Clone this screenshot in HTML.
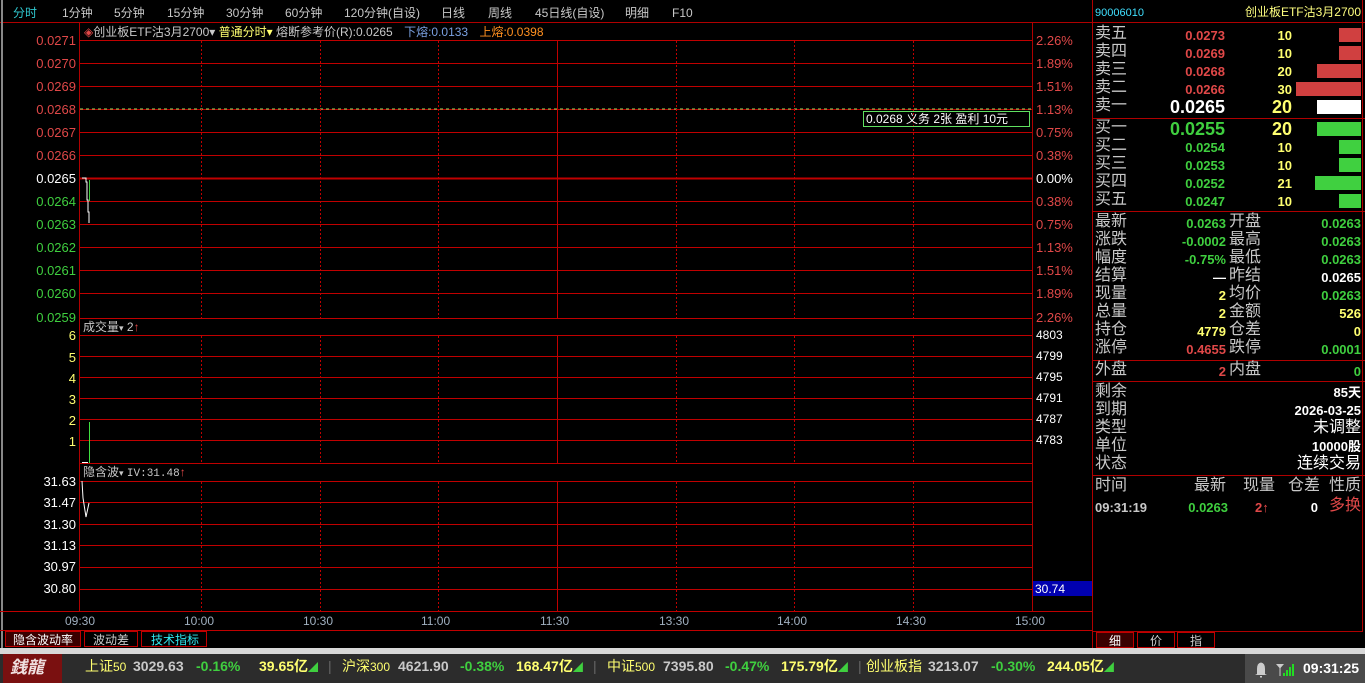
<!DOCTYPE html>
<html><head><meta charset="utf-8">
<style>
*{margin:0;padding:0;box-sizing:border-box}
body{width:1365px;height:683px;background:#000;overflow:hidden;position:relative;font-family:"Liberation Sans","Noto Sans CJK SC",sans-serif;font-size:12px;color:#c0c0c0}
.a{position:absolute;white-space:nowrap;line-height:1}
.r{text-align:right}
.red{color:#e04848}.grn{color:#3fcf3f}.wht{color:#fff}.yel{color:#ffff70}.cy{color:#40e0ff}.gry{color:#c8c8c8}
.mono{font-family:"Liberation Mono","Noto Sans CJK SC",monospace}
.lbl{font-size:16px;color:#c8c8c8}
.num{font-size:13px;font-weight:bold}
.ax{font-size:13px}
</style></head><body>
<div class="a" style="left:0;top:0;width:1092px;height:23px;border-bottom:1px solid #b00000"></div>
<div class="a" style="left:13px;top:7px;font-size:12px;color:#30c8d0">分时</div>
<div class="a gry" style="left:62px;top:7px">1分钟</div>
<div class="a gry" style="left:114px;top:7px">5分钟</div>
<div class="a gry" style="left:167px;top:7px">15分钟</div>
<div class="a gry" style="left:226px;top:7px">30分钟</div>
<div class="a gry" style="left:285px;top:7px">60分钟</div>
<div class="a gry" style="left:344px;top:7px">120分钟(自设)</div>
<div class="a gry" style="left:441px;top:7px">日线</div>
<div class="a gry" style="left:488px;top:7px">周线</div>
<div class="a gry" style="left:535px;top:7px">45日线(自设)</div>
<div class="a gry" style="left:625px;top:7px">明细</div>
<div class="a gry" style="left:672px;top:7px">F10</div>

<svg class="a" style="left:0;top:0" width="1365" height="683">
<rect x="1" y="0" width="2" height="648" fill="#888"/>
<line x1="1092.5" y1="0" x2="1092.5" y2="648" stroke="#b00000"/>
<line x1="79.5" y1="23" x2="79.5" y2="611" stroke="#b00000"/>
<line x1="1032.5" y1="23" x2="1032.5" y2="611" stroke="#b00000"/>
<line x1="80" y1="40.5" x2="1032" y2="40.5" stroke="#c00000"/>
<g stroke="#c00000">
<line x1="80" y1="63.5" x2="1032" y2="63.5"/><line x1="80" y1="86.5" x2="1032" y2="86.5"/>
<line x1="80" y1="109.5" x2="1032" y2="109.5"/>
<line x1="80" y1="132.5" x2="1032" y2="132.5"/><line x1="80" y1="155.5" x2="1032" y2="155.5"/>
<line x1="80" y1="178.5" x2="1032" y2="178.5" stroke-width="2"/>
<line x1="80" y1="201.5" x2="1032" y2="201.5"/><line x1="80" y1="224.5" x2="1032" y2="224.5"/>
<line x1="80" y1="247.5" x2="1032" y2="247.5"/><line x1="80" y1="270.5" x2="1032" y2="270.5"/>
<line x1="80" y1="293.5" x2="1032" y2="293.5"/><line x1="80" y1="318.5" x2="1032" y2="318.5"/>
<line x1="80" y1="335.5" x2="1032" y2="335.5"/><line x1="80" y1="356.5" x2="1032" y2="356.5"/>
<line x1="80" y1="377.5" x2="1032" y2="377.5"/><line x1="80" y1="398.5" x2="1032" y2="398.5"/>
<line x1="80" y1="419.5" x2="1032" y2="419.5"/><line x1="80" y1="440.5" x2="1032" y2="440.5"/>
<line x1="80" y1="463.5" x2="1032" y2="463.5"/>
<line x1="80" y1="481.5" x2="1032" y2="481.5"/><line x1="80" y1="502.5" x2="1032" y2="502.5"/>
<line x1="80" y1="524.5" x2="1032" y2="524.5"/><line x1="80" y1="545.5" x2="1032" y2="545.5"/>
<line x1="80" y1="567.5" x2="1032" y2="567.5"/><line x1="80" y1="589.5" x2="1032" y2="589.5"/>
<line x1="0" y1="611.5" x2="1092" y2="611.5"/>
<line x1="0" y1="630.5" x2="1092" y2="630.5"/>
</g>
<line x1="80" y1="109" x2="1032" y2="109" stroke="#a0e060" stroke-dasharray="3,3"/>
<g stroke="#c00000" stroke-dasharray="2,2">
<line x1="201.5" y1="41" x2="201.5" y2="318"/><line x1="320.5" y1="41" x2="320.5" y2="318"/><line x1="438.5" y1="41" x2="438.5" y2="318"/>
<line x1="676.5" y1="41" x2="676.5" y2="318"/><line x1="794.5" y1="41" x2="794.5" y2="318"/><line x1="913.5" y1="41" x2="913.5" y2="318"/>
<line x1="201.5" y1="336" x2="201.5" y2="463"/><line x1="320.5" y1="336" x2="320.5" y2="463"/><line x1="438.5" y1="336" x2="438.5" y2="463"/>
<line x1="676.5" y1="336" x2="676.5" y2="463"/><line x1="794.5" y1="336" x2="794.5" y2="463"/><line x1="913.5" y1="336" x2="913.5" y2="463"/>
<line x1="201.5" y1="482" x2="201.5" y2="611"/><line x1="320.5" y1="482" x2="320.5" y2="611"/><line x1="438.5" y1="482" x2="438.5" y2="611"/>
<line x1="676.5" y1="482" x2="676.5" y2="611"/><line x1="794.5" y1="482" x2="794.5" y2="611"/><line x1="913.5" y1="482" x2="913.5" y2="611"/>
</g>
<g stroke="#c00000">
<line x1="557.5" y1="41" x2="557.5" y2="318"/><line x1="557.5" y1="336" x2="557.5" y2="463"/><line x1="557.5" y1="482" x2="557.5" y2="611"/>
</g>
<polyline points="82,178 86,178 86,182 87,182 87,200 88,200 88,212 89,212 89,223" fill="none" stroke="#fff"/>
<line x1="89.5" y1="180" x2="89.5" y2="201" stroke="#40d040"/>
<line x1="89.5" y1="422" x2="89.5" y2="463" stroke="#40e040"/>
<line x1="82" y1="462.5" x2="88" y2="462.5" stroke="#fff"/>
<polyline points="82,481 83,498 86,517 89,503" fill="none" stroke="#fff"/>
<rect x="1033" y="581" width="59" height="15" fill="#0000b0"/>
<line x1="1093" y1="22.5" x2="1365" y2="22.5" stroke="#b00000"/>
<g stroke="#b00000">
<line x1="1093" y1="118.5" x2="1365" y2="118.5"/><line x1="1093" y1="211.5" x2="1365" y2="211.5"/>
<line x1="1093" y1="360.5" x2="1365" y2="360.5"/><line x1="1093" y1="381.5" x2="1365" y2="381.5"/>
<line x1="1093" y1="475.5" x2="1365" y2="475.5"/><line x1="1093" y1="631.5" x2="1363" y2="631.5"/>
<line x1="1362.5" y1="0" x2="1362.5" y2="632"/>
</g>
<rect x="1339" y="28" width="22" height="14" fill="#d04040"/>
<rect x="1339" y="46" width="22" height="14" fill="#d04040"/>
<rect x="1317" y="64" width="44" height="14" fill="#d04040"/>
<rect x="1296" y="82" width="65" height="14" fill="#d04040"/>
<rect x="1317" y="100" width="44" height="14" fill="#fff"/>
<rect x="1317" y="122" width="44" height="14" fill="#40d040"/>
<rect x="1339" y="140" width="22" height="14" fill="#40d040"/>
<rect x="1339" y="158" width="22" height="14" fill="#40d040"/>
<rect x="1315" y="176" width="46" height="14" fill="#40d040"/>
<rect x="1339" y="194" width="22" height="14" fill="#40d040"/>
</svg>

<div class="a" style="left:84px;top:26px;font-size:12px"><span class="red">◈</span><span class="gry">创业板ETF沽3月2700▾</span> <span class="yel">普通分时▾</span> <span class="gry">熔断参考价(R):0.0265</span> <span style="color:#7aa0e0;margin-left:8px">下熔:0.0133</span> <span style="color:#ff9020;margin-left:8px">上熔:0.0398</span></div>
<div class="a" style="left:863px;top:111px;width:167px;height:16px;border:1px solid #60e060;color:#fff;font-size:12px;padding:1px 2px">0.0268 义务 2张 盈利 10元</div>

<div class="a r red ax" style="left:16px;width:60px;top:34px">0.0271</div>
<div class="a r red ax" style="left:16px;width:60px;top:57px">0.0270</div>
<div class="a r red ax" style="left:16px;width:60px;top:80px">0.0269</div>
<div class="a r red ax" style="left:16px;width:60px;top:103px">0.0268</div>
<div class="a r red ax" style="left:16px;width:60px;top:126px">0.0267</div>
<div class="a r red ax" style="left:16px;width:60px;top:149px">0.0266</div>
<div class="a r wht ax" style="left:16px;width:60px;top:172px">0.0265</div>
<div class="a r grn ax" style="left:16px;width:60px;top:195px">0.0264</div>
<div class="a r grn ax" style="left:16px;width:60px;top:218px">0.0263</div>
<div class="a r grn ax" style="left:16px;width:60px;top:241px">0.0262</div>
<div class="a r grn ax" style="left:16px;width:60px;top:264px">0.0261</div>
<div class="a r grn ax" style="left:16px;width:60px;top:287px">0.0260</div>
<div class="a r grn ax" style="left:16px;width:60px;top:311px">0.0259</div>
<div class="a red ax" style="left:1036px;top:34px">2.26%</div>
<div class="a red ax" style="left:1036px;top:57px">1.89%</div>
<div class="a red ax" style="left:1036px;top:80px">1.51%</div>
<div class="a red ax" style="left:1036px;top:103px">1.13%</div>
<div class="a red ax" style="left:1036px;top:126px">0.75%</div>
<div class="a red ax" style="left:1036px;top:149px">0.38%</div>
<div class="a wht ax" style="left:1036px;top:172px">0.00%</div>
<div class="a red ax" style="left:1036px;top:195px">0.38%</div>
<div class="a red ax" style="left:1036px;top:218px">0.75%</div>
<div class="a red ax" style="left:1036px;top:241px">1.13%</div>
<div class="a red ax" style="left:1036px;top:264px">1.51%</div>
<div class="a red ax" style="left:1036px;top:287px">1.89%</div>
<div class="a red ax" style="left:1036px;top:311px">2.26%</div>

<div class="a gry" style="left:83px;top:321px">成交量<span style="font-size:9px">▾</span> 2<span class="red">↑</span></div>
<div class="a r yel ax" style="left:16px;width:60px;top:329px">6</div>
<div class="a r yel ax" style="left:16px;width:60px;top:351px">5</div>
<div class="a r yel ax" style="left:16px;width:60px;top:372px">4</div>
<div class="a r yel ax" style="left:16px;width:60px;top:393px">3</div>
<div class="a r yel ax" style="left:16px;width:60px;top:414px">2</div>
<div class="a r yel ax" style="left:16px;width:60px;top:435px">1</div>
<div class="a wht" style="left:1036px;top:329px">4803</div>
<div class="a wht" style="left:1036px;top:350px">4799</div>
<div class="a wht" style="left:1036px;top:371px">4795</div>
<div class="a wht" style="left:1036px;top:392px">4791</div>
<div class="a wht" style="left:1036px;top:413px">4787</div>
<div class="a wht" style="left:1036px;top:434px">4783</div>

<div class="a gry" style="left:83px;top:466px">隐含波<span style="font-size:9px">▾</span> <span class="mono" style="font-size:11px">IV:31.48</span><span class="red">↑</span></div>
<div class="a r wht ax" style="left:16px;width:60px;top:475px">31.63</div>
<div class="a r wht ax" style="left:16px;width:60px;top:496px">31.47</div>
<div class="a r wht ax" style="left:16px;width:60px;top:518px">31.30</div>
<div class="a r wht ax" style="left:16px;width:60px;top:539px">31.13</div>
<div class="a r wht ax" style="left:16px;width:60px;top:560px">30.97</div>
<div class="a r wht ax" style="left:16px;width:60px;top:582px">30.80</div>
<div class="a wht" style="left:1035px;top:583px">30.74</div>

<div class="a" style="left:65px;top:615px;color:#a0b0c0">09:30</div>
<div class="a" style="left:184px;top:615px;color:#a0b0c0">10:00</div>
<div class="a" style="left:303px;top:615px;color:#a0b0c0">10:30</div>
<div class="a" style="left:421px;top:615px;color:#a0b0c0">11:00</div>
<div class="a" style="left:540px;top:615px;color:#a0b0c0">11:30</div>
<div class="a" style="left:659px;top:615px;color:#a0b0c0">13:30</div>
<div class="a" style="left:777px;top:615px;color:#a0b0c0">14:00</div>
<div class="a" style="left:896px;top:615px;color:#a0b0c0">14:30</div>
<div class="a" style="left:1015px;top:615px;color:#a0b0c0">15:00</div>

<div class="a" style="left:5px;top:631px;width:76px;height:16px;border:1px solid #c00000;background:#3a0000;color:#fff;font-size:12px;padding:2px 0 0 7px">隐含波动率</div>
<div class="a" style="left:84px;top:631px;width:54px;height:16px;border:1px solid #c00000;color:#ccc;font-size:12px;padding:2px 0 0 8px">波动差</div>
<div class="a" style="left:141px;top:631px;width:66px;height:16px;border:1px solid #c00000;color:#30e8f0;font-size:12px;padding:2px 0 0 9px">技术指标</div>
<div class="a" style="left:1096px;top:632px;width:38px;height:16px;border:1px solid #c00000;background:#3a0000;color:#fff;padding:2px 0 0 12px">细</div>
<div class="a" style="left:1137px;top:632px;width:38px;height:16px;border:1px solid #c00000;color:#ccc;padding:2px 0 0 12px">价</div>
<div class="a" style="left:1177px;top:632px;width:38px;height:16px;border:1px solid #c00000;color:#ccc;padding:2px 0 0 12px">指</div>
<div class="a" style="left:0;top:648px;width:1365px;height:6px;background:#d8d8d8"></div>

<div class="a cy" style="left:1095px;top:8px;font-size:11px">90006010</div>
<div class="a r" style="left:1200px;width:161px;top:6px;color:#ffff80;font-size:12px">创业板ETF沽3月2700</div>

<div class="a lbl" style="left:1095px;top:26px">卖五</div><div class="a r red num" style="left:1150px;width:75px;top:29px">0.0273</div><div class="a r yel num" style="left:1240px;width:52px;top:29px">10</div>
<div class="a lbl" style="left:1095px;top:44px">卖四</div><div class="a r red num" style="left:1150px;width:75px;top:47px">0.0269</div><div class="a r yel num" style="left:1240px;width:52px;top:47px">10</div>
<div class="a lbl" style="left:1095px;top:62px">卖三</div><div class="a r red num" style="left:1150px;width:75px;top:65px">0.0268</div><div class="a r yel num" style="left:1240px;width:52px;top:65px">20</div>
<div class="a lbl" style="left:1095px;top:80px">卖二</div><div class="a r red num" style="left:1150px;width:75px;top:83px">0.0266</div><div class="a r yel num" style="left:1240px;width:52px;top:83px">30</div>
<div class="a lbl" style="left:1095px;top:98px">卖一</div><div class="a r wht" style="left:1130px;width:95px;top:98px;font-size:18px;font-weight:bold">0.0265</div><div class="a r yel" style="left:1240px;width:52px;top:98px;font-size:18px;font-weight:bold">20</div>
<div class="a lbl" style="left:1095px;top:120px">买一</div><div class="a r grn" style="left:1130px;width:95px;top:120px;font-size:18px;font-weight:bold">0.0255</div><div class="a r yel" style="left:1240px;width:52px;top:120px;font-size:18px;font-weight:bold">20</div>
<div class="a lbl" style="left:1095px;top:138px">买二</div><div class="a r grn num" style="left:1150px;width:75px;top:141px">0.0254</div><div class="a r yel num" style="left:1240px;width:52px;top:141px">10</div>
<div class="a lbl" style="left:1095px;top:156px">买三</div><div class="a r grn num" style="left:1150px;width:75px;top:159px">0.0253</div><div class="a r yel num" style="left:1240px;width:52px;top:159px">10</div>
<div class="a lbl" style="left:1095px;top:174px">买四</div><div class="a r grn num" style="left:1150px;width:75px;top:177px">0.0252</div><div class="a r yel num" style="left:1240px;width:52px;top:177px">21</div>
<div class="a lbl" style="left:1095px;top:192px">买五</div><div class="a r grn num" style="left:1150px;width:75px;top:195px">0.0247</div><div class="a r yel num" style="left:1240px;width:52px;top:195px">10</div>

<div class="a lbl" style="left:1095px;top:214px">最新</div><div class="a r grn num" style="left:1140px;width:86px;top:217px">0.0263</div><div class="a lbl" style="left:1229px;top:214px">开盘</div><div class="a r grn num" style="left:1280px;width:81px;top:217px">0.0263</div>
<div class="a lbl" style="left:1095px;top:232px">涨跌</div><div class="a r grn num" style="left:1140px;width:86px;top:235px">-0.0002</div><div class="a lbl" style="left:1229px;top:232px">最高</div><div class="a r grn num" style="left:1280px;width:81px;top:235px">0.0263</div>
<div class="a lbl" style="left:1095px;top:250px">幅度</div><div class="a r grn num" style="left:1140px;width:86px;top:253px">-0.75%</div><div class="a lbl" style="left:1229px;top:250px">最低</div><div class="a r grn num" style="left:1280px;width:81px;top:253px">0.0263</div>
<div class="a lbl" style="left:1095px;top:268px">结算</div><div class="a r wht num" style="left:1140px;width:86px;top:271px">—</div><div class="a lbl" style="left:1229px;top:268px">昨结</div><div class="a r wht num" style="left:1280px;width:81px;top:271px">0.0265</div>
<div class="a lbl" style="left:1095px;top:286px">现量</div><div class="a r yel num" style="left:1140px;width:86px;top:289px">2</div><div class="a lbl" style="left:1229px;top:286px">均价</div><div class="a r grn num" style="left:1280px;width:81px;top:289px">0.0263</div>
<div class="a lbl" style="left:1095px;top:304px">总量</div><div class="a r yel num" style="left:1140px;width:86px;top:307px">2</div><div class="a lbl" style="left:1229px;top:304px">金额</div><div class="a r yel num" style="left:1280px;width:81px;top:307px">526</div>
<div class="a lbl" style="left:1095px;top:322px">持仓</div><div class="a r yel num" style="left:1140px;width:86px;top:325px">4779</div><div class="a lbl" style="left:1229px;top:322px">仓差</div><div class="a r yel num" style="left:1280px;width:81px;top:325px">0</div>
<div class="a lbl" style="left:1095px;top:340px">涨停</div><div class="a r red num" style="left:1140px;width:86px;top:343px">0.4655</div><div class="a lbl" style="left:1229px;top:340px">跌停</div><div class="a r grn num" style="left:1280px;width:81px;top:343px">0.0001</div>
<div class="a lbl" style="left:1095px;top:362px">外盘</div><div class="a r red num" style="left:1140px;width:86px;top:365px">2</div><div class="a lbl" style="left:1229px;top:362px">内盘</div><div class="a r grn num" style="left:1280px;width:81px;top:365px">0</div>

<div class="a lbl" style="left:1095px;top:384px">剩余</div><div class="a r wht num" style="left:1200px;width:161px;top:386px">85天</div>
<div class="a lbl" style="left:1095px;top:402px">到期</div><div class="a r wht num" style="left:1200px;width:161px;top:404px">2026-03-25</div>
<div class="a lbl" style="left:1095px;top:420px">类型</div><div class="a r wht" style="left:1200px;width:161px;top:420px;font-size:16px">未调整</div>
<div class="a lbl" style="left:1095px;top:438px">单位</div><div class="a r wht num" style="left:1200px;width:161px;top:440px">10000股</div>
<div class="a lbl" style="left:1095px;top:456px">状态</div><div class="a r wht" style="left:1200px;width:161px;top:456px;font-size:16px">连续交易</div>

<div class="a lbl" style="left:1095px;top:478px">时间</div>
<div class="a lbl r" style="left:1180px;width:46px;top:478px">最新</div>
<div class="a lbl" style="left:1243px;top:478px">现量</div>
<div class="a lbl" style="left:1288px;top:478px">仓差</div>
<div class="a lbl" style="left:1329px;top:478px">性质</div>
<div class="a num gry" style="left:1095px;top:501px">09:31:19</div>
<div class="a r grn num" style="left:1170px;width:58px;top:501px">0.0263</div>
<div class="a red num" style="left:1255px;top:501px">2↑</div>
<div class="a r wht num" style="left:1290px;width:28px;top:501px">0</div>
<div class="a red" style="left:1329px;top:498px;font-size:16px">多换</div>

<div class="a" style="left:0;top:654px;width:1365px;height:29px;background:#2c2c2c"></div>
<div class="a" style="left:3px;top:654px;width:59px;height:29px;background:#7a1010;color:#f0e0e0;font-size:17px;font-weight:bold;font-style:italic;padding:5px 0 0 7px">銭龍</div>
<div class="a" style="left:0;top:659px;font-size:14px;line-height:18px;width:1245px">
<span class="a yel" style="left:85px">上证<span style="font-size:12px">50</span></span><span class="a gry" style="left:133px;font-weight:bold">3029.63</span><span class="a grn" style="left:196px;font-weight:bold">-0.16%</span><span class="a yel" style="left:259px;font-weight:bold">39.65亿<span style="color:#3fcf3f;font-size:10px">◢</span></span>
<span class="a" style="left:328px;color:#666">|</span>
<span class="a yel" style="left:342px">沪深<span style="font-size:12px">300</span></span><span class="a gry" style="left:398px;font-weight:bold">4621.90</span><span class="a grn" style="left:460px;font-weight:bold">-0.38%</span><span class="a yel" style="left:516px;font-weight:bold">168.47亿<span style="color:#3fcf3f;font-size:10px">◢</span></span>
<span class="a" style="left:593px;color:#666">|</span>
<span class="a yel" style="left:607px">中证<span style="font-size:12px">500</span></span><span class="a gry" style="left:663px;font-weight:bold">7395.80</span><span class="a grn" style="left:725px;font-weight:bold">-0.47%</span><span class="a yel" style="left:781px;font-weight:bold">175.79亿<span style="color:#3fcf3f;font-size:10px">◢</span></span>
<span class="a" style="left:858px;color:#666">|</span>
<span class="a yel" style="left:866px">创业板指</span><span class="a gry" style="left:928px;font-weight:bold">3213.07</span><span class="a grn" style="left:991px;font-weight:bold">-0.30%</span><span class="a yel" style="left:1047px;font-weight:bold">244.05亿<span style="color:#3fcf3f;font-size:10px">◢</span></span>
</div>
<div class="a" style="left:1245px;top:654px;width:120px;height:29px;background:#4a4a4a"></div>
<svg class="a" style="left:1252px;top:659px" width="45" height="20">
<path d="M5 15 L5 10 Q5 4 9 3.5 Q13 4 13 10 L13 15 L15 16 L3 16 Z M8 17 h2 v1.5 h-2z" fill="#ccc"/>
<path d="M24 5 h8 l-3.5 4 v8 h-1 v-8z" fill="#ccc"/>
<rect x="31" y="14" width="2" height="3" fill="#2d2"/><rect x="34" y="11" width="2" height="6" fill="#2d2"/><rect x="37" y="8" width="2" height="9" fill="#2d2"/><rect x="40" y="5" width="2" height="12" fill="#2d2"/>
</svg>
<div class="a wht" style="left:1303px;top:661px;font-size:14px;font-weight:bold">09:31:25</div>
</body></html>
